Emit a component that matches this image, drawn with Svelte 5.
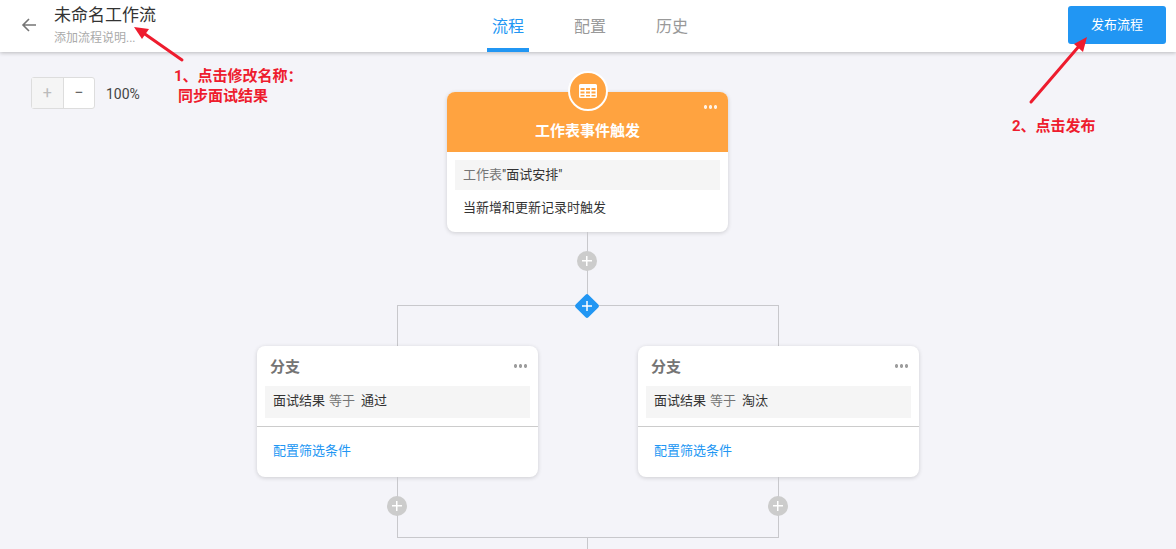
<script>
    const tabs = [
        { label: "流程", active: true },
        { label: "配置", active: false },
        { label: "历史", active: false }
    ];

    const branches = [
        { field: "面试结果", op: "等于", value: "通过" },
        { field: "面试结果", op: "等于", value: "淘汰" }
    ];
</script>

<div class="page">
    <header class="topbar">
        <div class="title-area">
            <svg class="back" width="16" height="16" viewBox="0 0 16 16">
                <path d="M15 8H2M8 2L2 8l6 6" fill="none" stroke="#757575" stroke-width="1.6" />
            </svg>
            <div class="title-text">
                <div class="name">未命名工作流</div>
                <div class="desc">添加流程说明...</div>
            </div>
        </div>
        <nav class="tabs">
            {#each tabs as tab}
                <div class="tab" class:active={tab.active}>{tab.label}</div>
            {/each}
        </nav>
        <button class="publish">发布流程</button>
    </header>

    <main class="canvas">
        <div class="zoom">
            <div class="zoom-buttons">
                <span class="zoom-btn disabled">+</span>
                <span class="zoom-btn">−</span>
            </div>
            <span class="zoom-value">100%</span>
        </div>

        <div class="flow">
            <section class="card trigger">
                <div class="trigger-icon">
                    <svg width="18" height="14" viewBox="0 0 18 14">
                        <path fill="#fff" fill-rule="evenodd" d="M1.5 0h15A1.5 1.5 0 0 1 18 1.500v11a1.500 1.500 0 0 1-1.500 1.500h-15A1.500 1.500 0 0 1 0 12.500v-11A1.500 1.500 0 0 1 1.500 0zM1.500 4v2h4V4zm5.500 0v2h4V4zm5.500 0v2h4V4zM1.500 7.500v2h4v-2zm5.500 0v2h4v-2zm5.500 0v2h4v-2zM1.500 11v1.500h4V11zm5.500 0v1.500h4V11zm5.500 0v1.500h4V11z" />
                    </svg>
                </div>
                <div class="trigger-head">
                    <span class="more light"></span>
                    <h2>工作表事件触发</h2>
                </div>
                <div class="trigger-body">
                    <div class="info"><span class="muted">工作表</span>"面试安排"</div>
                    <div class="note">当新增和更新记录时触发</div>
                </div>
            </section>

            <div class="connector">
                <span class="add"></span>
            </div>

            <div class="rail rail-top">
                <svg class="diamond" width="26" height="26" viewBox="0 0 26 26">
                    <rect x="4" y="4" width="18" height="18" rx="2" fill="#2196f3" transform="rotate(45 13 13)" />
                    <path d="M8 13h10M13 8v10" stroke="#fff" stroke-width="1.5" />
                </svg>
            </div>

            <div class="branches">
                {#each branches as branch}
                    <section class="card branch">
                        <div class="branch-head">
                            <h3>分支</h3>
                            <span class="more"></span>
                        </div>
                        <div class="info">
                            <span>{branch.field}</span>
                            <span class="muted">{branch.op}</span>
                            <span>{branch.value}</span>
                        </div>
                        <div class="branch-foot">配置筛选条件</div>
                    </section>
                {/each}
            </div>

            <div class="rail rail-bottom">
                <span class="add left"></span>
                <span class="add right"></span>
            </div>
            <div class="tail"></div>
        </div>

        <div class="tip tip-one">1、点击修改名称：<br /><span class="tip-indent">同步面试结果</span></div>
        <div class="tip tip-two">2、点击发布</div>
    </main>

    <svg class="arrows" width="1176" height="549" viewBox="0 0 1176 549">
        <g fill="none" stroke="#ee1c2e" stroke-width="3" stroke-linecap="round">
            <path d="M182 60L142 32" />
            <path d="M1031 102L1080 45" />
        </g>
        <path fill="#ee1c2e" d="M134 27L149 29L142 39z" />
        <path fill="#ee1c2e" d="M1087 37L1083 52L1074 44z" />
    </svg>
</div>

<style>
    :global(body) {
        margin: 0;
        overflow: hidden;
    }

    .page {
        position: relative;
        display: flex;
        flex-direction: column;
        width: 1176px;
        height: 549px;
        overflow: hidden;
        background-color: #f4f4f9;
        color: #333;
        font-family: "Roboto", "Noto Sans CJK SC", sans-serif;
        font-size: 13px;
    }

    .topbar {
        position: relative;
        z-index: 2;
        display: grid;
        grid-template-columns: 1fr auto 1fr;
        flex: 0 0 52px;
        background-color: #fff;
        box-shadow: 0 1px 4px rgba(0, 0, 0, 0.24);
    }

    .title-area {
        display: flex;
        align-items: flex-start;
        padding-left: 21px;
    }

    .back {
        margin: 17px 17px 0 0;
    }

    .title-text {
        padding-top: 5px;
    }

    .name {
        font-size: 17px;
        line-height: 20px;
        color: #333;
    }

    .desc {
        margin-top: 5px;
        font-size: 12px;
        line-height: 17px;
        color: #aaa;
    }

    .tabs {
        display: flex;
        gap: 40px;
        transform: translateX(2px);
    }

    .tab {
        box-sizing: border-box;
        width: 42px;
        height: 52px;
        padding-top: 16px;
        font-size: 16px;
        line-height: 22px;
        text-align: center;
        color: #999;
    }

    .tab.active {
        color: #2196f3;
        border-bottom: 4px solid #2196f3;
    }

    .publish {
        justify-self: end;
        width: 98px;
        height: 38px;
        margin: 6px 10px 0 0;
        padding: 0 0 4px;
        border: none;
        border-radius: 3px;
        background-color: #2196f3;
        color: #fff;
        font: inherit;
        font-size: 13px;
    }

    .canvas {
        position: relative;
        flex: 1;
    }

    .zoom {
        position: absolute;
        left: 31px;
        top: 25px;
        display: flex;
        align-items: center;
        gap: 11px;
    }

    .zoom-buttons {
        display: flex;
        box-sizing: border-box;
        width: 64px;
        height: 32px;
        border: 1px solid #ddd;
        border-radius: 3px;
        background-color: #fff;
    }

    .zoom-btn {
        flex: 1;
        font-size: 16px;
        line-height: 30px;
        text-align: center;
        color: #666;
    }

    .zoom-btn.disabled {
        background-color: #f5f5f5;
        border-right: 1px solid #ddd;
        color: #bbb;
    }

    .zoom-value {
        padding-top: 2px;
        font-size: 14px;
        color: #444;
    }

    .flow {
        display: flex;
        flex-direction: column;
        align-items: center;
        padding-top: 40px;
    }

    .card {
        position: relative;
        box-sizing: border-box;
        width: 281px;
        border-radius: 8px;
        background-color: #fff;
        box-shadow: 0 1px 4px rgba(0, 0, 0, 0.16);
    }

    .trigger {
        height: 140px;
        margin-right: 1px;
    }

    .trigger-icon {
        position: absolute;
        z-index: 1;
        left: 121px;
        top: -21px;
        display: flex;
        align-items: center;
        justify-content: center;
        box-sizing: border-box;
        width: 40px;
        height: 40px;
        border: 2px solid #fff;
        border-radius: 50%;
        background-color: #ffa340;
    }

    .trigger-head {
        position: relative;
        height: 60px;
        border-radius: 8px 8px 0 0;
        background-color: #ffa340;
        color: #fff;
    }

    .trigger-head h2 {
        margin: 0;
        padding-top: 29px;
        font-size: 15px;
        line-height: 21px;
        font-weight: 700;
        text-align: center;
    }

    .more {
        position: absolute;
        right: 10px;
        top: 13px;
        width: 15px;
        height: 4px;
        background: radial-gradient(circle, #9e9e9e 1.6px, transparent 2px) left center / 5px 4px repeat-x;
    }

    .more.light {
        background-image: radial-gradient(circle, #fff 1.6px, transparent 2px);
        opacity: 0.85;
    }

    .trigger-body {
        padding-top: 8px;
    }

    .info {
        box-sizing: border-box;
        margin: 0 8px;
        padding-left: 8px;
        font-size: 13px;
    }

    .trigger-body .info {
        height: 30px;
        line-height: 30px;
        background-color: #f5f5f5;
    }

    .muted {
        color: #757575;
    }

    .note {
        padding: 8px 16px 0;
        font-size: 13px;
        line-height: 20px;
    }

    .connector {
        position: relative;
        width: 1px;
        height: 73px;
        margin-right: 1px;
        background-color: #c8c8cc;
    }

    .add {
        position: absolute;
        width: 20px;
        height: 20px;
        border-radius: 50%;
        background:
            linear-gradient(#fff, #fff) center / 10px 1.5px no-repeat,
            linear-gradient(#fff, #fff) center / 1.5px 10px no-repeat,
            #ccc;
    }

    .connector .add {
        left: -10px;
        top: 19px;
    }

    .rail {
        position: relative;
        box-sizing: border-box;
        width: 382px;
        border: 0 solid #c8c8cc;
        border-left-width: 1px;
        border-right-width: 1px;
    }

    .rail-top {
        height: 41px;
        border-top-width: 1px;
    }

    .diamond {
        position: absolute;
        left: 176px;
        top: -13px;
    }

    .branches {
        display: flex;
        gap: 100px;
    }

    .branch {
        height: 131px;
    }

    .branch-head {
        position: relative;
        height: 40px;
    }

    .branch-head h3 {
        margin: 0;
        padding: 11px 0 0 13px;
        font-size: 15px;
        line-height: 20px;
        font-weight: 700;
        color: #757575;
    }

    .branch-head .more {
        right: 10px;
        top: 18px;
    }

    .branch .info {
        display: flex;
        gap: 4px;
        height: 32px;
        line-height: 30px;
        background-color: #f5f5f5;
    }

    .branch .info .muted {
        margin-right: 2px;
    }

    .branch-foot {
        margin-top: 8px;
        padding: 14px 16px 0;
        border-top: 1px solid #ccc;
        font-size: 13px;
        line-height: 20px;
        color: #2196f3;
    }

    .rail-bottom {
        height: 61px;
        border-bottom-width: 1px;
    }

    .add.left {
        left: -11px;
        top: 19px;
    }

    .add.right {
        right: -10px;
        top: 19px;
    }

    .tail {
        width: 1px;
        height: 12px;
        margin-right: 1px;
        background-color: #c8c8cc;
    }

    .tip {
        position: absolute;
        font-size: 15px;
        line-height: 20px;
        font-weight: 700;
        color: #ee1c2e;
    }

    .tip-one {
        left: 174px;
        top: 14px;
    }

    .tip-indent {
        margin-left: 4px;
    }

    .tip-two {
        left: 1012px;
        top: 64px;
    }

    .arrows {
        position: absolute;
        z-index: 3;
        left: 0;
        top: 0;
        pointer-events: none;
    }
</style>
